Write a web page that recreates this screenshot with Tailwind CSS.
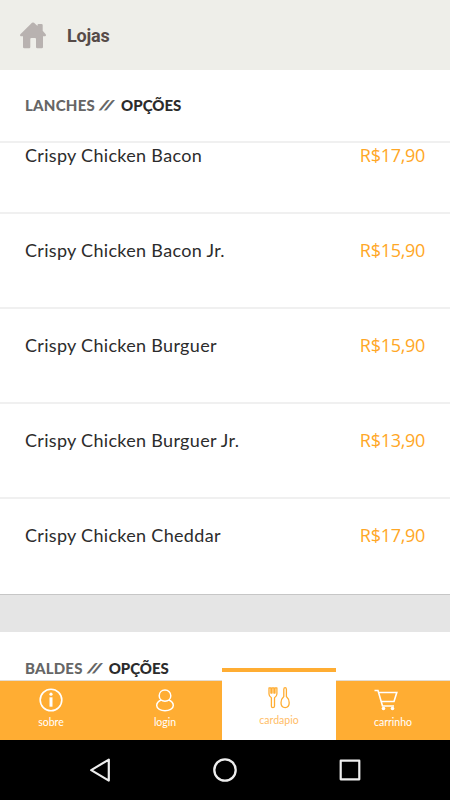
<!DOCTYPE html>
<html lang="pt-BR">
<head>
<meta charset="utf-8">
<meta name="viewport" content="width=device-width, initial-scale=1">
<title>Lojas</title>
<script src="https://cdn.jsdelivr.net/npm/@tailwindcss/browser@4"></script>
</head>
<body class="w-[450px] h-[800px] overflow-hidden bg-white font-['Lato',sans-serif]">
<div class="flex flex-col h-[800px]">
  <header class="h-[70px] shrink-0 bg-[#eeeee9] flex items-center pl-5">
    <svg class="w-[26px] h-[27px]" viewBox="0 0 26 27" fill="#b8b2b0"><path d="M12 .7Q13 .1 14 .7L17.5 4V3Q17.5 2 18.5 2H21.5Q22.7 2 22.7 3V8.8L25.7 12.2Q26.5 13.8 25 14.3H23V25Q23 26.2 21.8 26.2H17.2Q16 26.2 16 25V17Q16 16 15 16H11.5Q10.3 16 10.3 17V25Q10.3 26.2 9.2 26.2H4.2Q3 26.2 3 25V14.3H1Q-.5 13.8.4 12.2Z"/></svg>
    <h1 class="ml-[21px] mt-[2px] text-[18px] leading-6 font-bold tracking-[-0.2px] text-[#564b48] font-['Roboto',sans-serif]">Lojas</h1>
  </header>
  <h2 class="h-[71px] shrink-0 flex items-center pl-[25px] text-[15px] font-black text-[#666]"><span class="tracking-[0.25px]">LANCHES</span><span class="ml-[4px] w-[22px]"><span class="inline-block origin-left scale-x-[1.55] scale-y-[0.85] italic">//</span></span><span class="text-[#2b2b2b]">OPÇÕES</span></h2>
  <ul class="h-[454px] shrink-0 border-t-2 border-[#f0f0f0] overflow-hidden flex flex-col justify-end text-[18px] text-[#2c2c2c]">
    <li class="h-[95px] shrink-0 px-[25px] pt-[23px] border-b-2 border-[#f0f0f0] flex justify-between leading-[26px]"><span class="tracking-[0.31px]">Crispy Chicken Bacon</span><span class="text-[#ffa726] tracking-[-0.3px] font-['Open_Sans',sans-serif]">R$17,90</span></li>
    <li class="h-[95px] shrink-0 px-[25px] pt-[23px] border-b-2 border-[#f0f0f0] flex justify-between leading-[26px]"><span class="tracking-[0.31px]">Crispy Chicken Bacon Jr.</span><span class="text-[#ffa726] tracking-[-0.3px] font-['Open_Sans',sans-serif]">R$15,90</span></li>
    <li class="h-[95px] shrink-0 px-[25px] pt-[23px] border-b-2 border-[#f0f0f0] flex justify-between leading-[26px]"><span class="tracking-[0.31px]">Crispy Chicken Burguer</span><span class="text-[#ffa726] tracking-[-0.3px] font-['Open_Sans',sans-serif]">R$15,90</span></li>
    <li class="h-[95px] shrink-0 px-[25px] pt-[23px] border-b-2 border-[#f0f0f0] flex justify-between leading-[26px]"><span class="tracking-[0.31px]">Crispy Chicken Burguer Jr.</span><span class="text-[#ffa726] tracking-[-0.3px] font-['Open_Sans',sans-serif]">R$13,90</span></li>
    <li class="h-[96px] shrink-0 px-[25px] pt-[23px] border-b border-[#c6c6c6] flex justify-between leading-[26px]"><span class="tracking-[0.31px]">Crispy Chicken Cheddar</span><span class="text-[#ffa726] tracking-[-0.3px] font-['Open_Sans',sans-serif]">R$17,90</span></li>
  </ul>
  <div class="h-[37px] shrink-0 bg-[#e5e5e5]"></div>
  <h2 class="h-[48px] shrink-0 flex pt-[25px] pl-[25px] leading-[22px] text-[15px] font-black text-[#666]"><span class="tracking-[0.2px]">BALDES</span><span class="ml-[4px] w-[22px]"><span class="inline-block origin-left scale-x-[1.55] scale-y-[0.85] italic">//</span></span><span class="text-[#2b2b2b]">OPÇÕES</span></h2>
  <nav class="h-[60px] shrink-0 flex items-end text-[10.5px] leading-[14px] text-white">
    <div class="w-[102px] h-[60px] border-t border-[#e3dcd2] bg-[#ffad33] flex flex-col items-center pt-[7px]">
      <svg class="w-6 h-6 shrink-0" viewBox="0 0 24 24" fill="none" stroke="#fff" stroke-width="1.6"><circle cx="12" cy="12" r="10.8"/><circle cx="12" cy="6.2" r="1.6" fill="#fff" stroke="none"/><path d="M12 9.3V18.7" stroke-width="3"/></svg>
      <span class="mt-[3px]">sobre</span>
    </div>
    <div class="w-[120px] h-[60px] pl-[6px] border-t border-[#e3dcd2] bg-[#ffad33] flex flex-col items-center pt-[7px]">
      <svg class="w-6 h-6 shrink-0" viewBox="0 0 24 24" fill="none" stroke="#fff" stroke-width="1.5"><path d="M12 2C8.6 2 6.2 4.5 6.2 7.8S8.8 13.2 12 13.2 17.8 11 17.8 7.8 15.4 2 12 2ZM8 12C5.2 13.3 3.7 15.3 3.7 17.5 3.7 21 8 22.8 12 22.8S20.3 21 20.3 17.5C20.3 15.3 18.8 13.3 16 12"/></svg>
      <span class="mt-[3px]">login</span>
    </div>
    <div class="w-[114px] h-[72px] shrink-0 border-t-4 border-[#ffad33] bg-white text-[#ffbd66] flex flex-col items-center pt-[14px]">
      <svg class="w-6 h-6 shrink-0" viewBox="0 0 24 24" fill="none" stroke="#ffad33" stroke-width="1.3" stroke-linejoin="round"><path d="M2 1.9V8Q2 10.2 4.4 11.7V20.2Q4.4 21.6 5.9 21.6T7.5 20.2V11.7Q9.9 10.2 9.9 8V1.9H8V7H6.9V1.9H5V7H3.9V1.9Z"/><path d="M16.8 10.5V3.2Q16.9 1.7 18.1 1.7T19.4 3.2V10.5Q22.2 13 22.2 16.8C22.2 20 20.5 21.6 18.1 21.6S14 20 14 16.8Q14 13 16.8 10.5Z"/></svg>
      <span class="mt-[3px]">cardapio</span>
    </div>
    <div class="w-[114px] h-[60px] border-t border-[#e3dcd2] bg-[#ffad33] flex flex-col items-center pt-[7px]">
      <svg class="w-6 h-6 shrink-0 -ml-[14px]" viewBox="0 0 24 24" fill="none" stroke="#fff" stroke-width="1.6"><path d="M.5 2.5H4L8.5 18H20M5 4.5H22.8L20 13.5H7.5"/><circle cx="9.5" cy="20.5" r="1.8" fill="#fff" stroke="none"/><circle cx="18.5" cy="20.5" r="1.8" fill="#fff" stroke="none"/></svg>
      <span class="mt-[3px]">carrinho</span>
    </div>
  </nav>
  <footer class="h-[60px] shrink-0 bg-black flex items-center justify-between px-[88px]">
    <svg class="w-6 h-6" viewBox="0 0 24 24" fill="none" stroke="#eee" stroke-width="2.2" stroke-linejoin="round"><path d="M20.8 1.6V22.6L3.2 12.1Z"/></svg>
    <svg class="w-6 h-6" viewBox="0 0 24 24" fill="none" stroke="#eee" stroke-width="2.3"><circle cx="12" cy="12" r="10.7"/></svg>
    <svg class="w-6 h-6" viewBox="0 0 24 24" fill="none" stroke="#eee" stroke-width="2.2" stroke-linejoin="round"><path d="M2.7 2.7H21.3V21.3H2.7Z"/></svg>
  </footer>
</div>
</body>
</html>
